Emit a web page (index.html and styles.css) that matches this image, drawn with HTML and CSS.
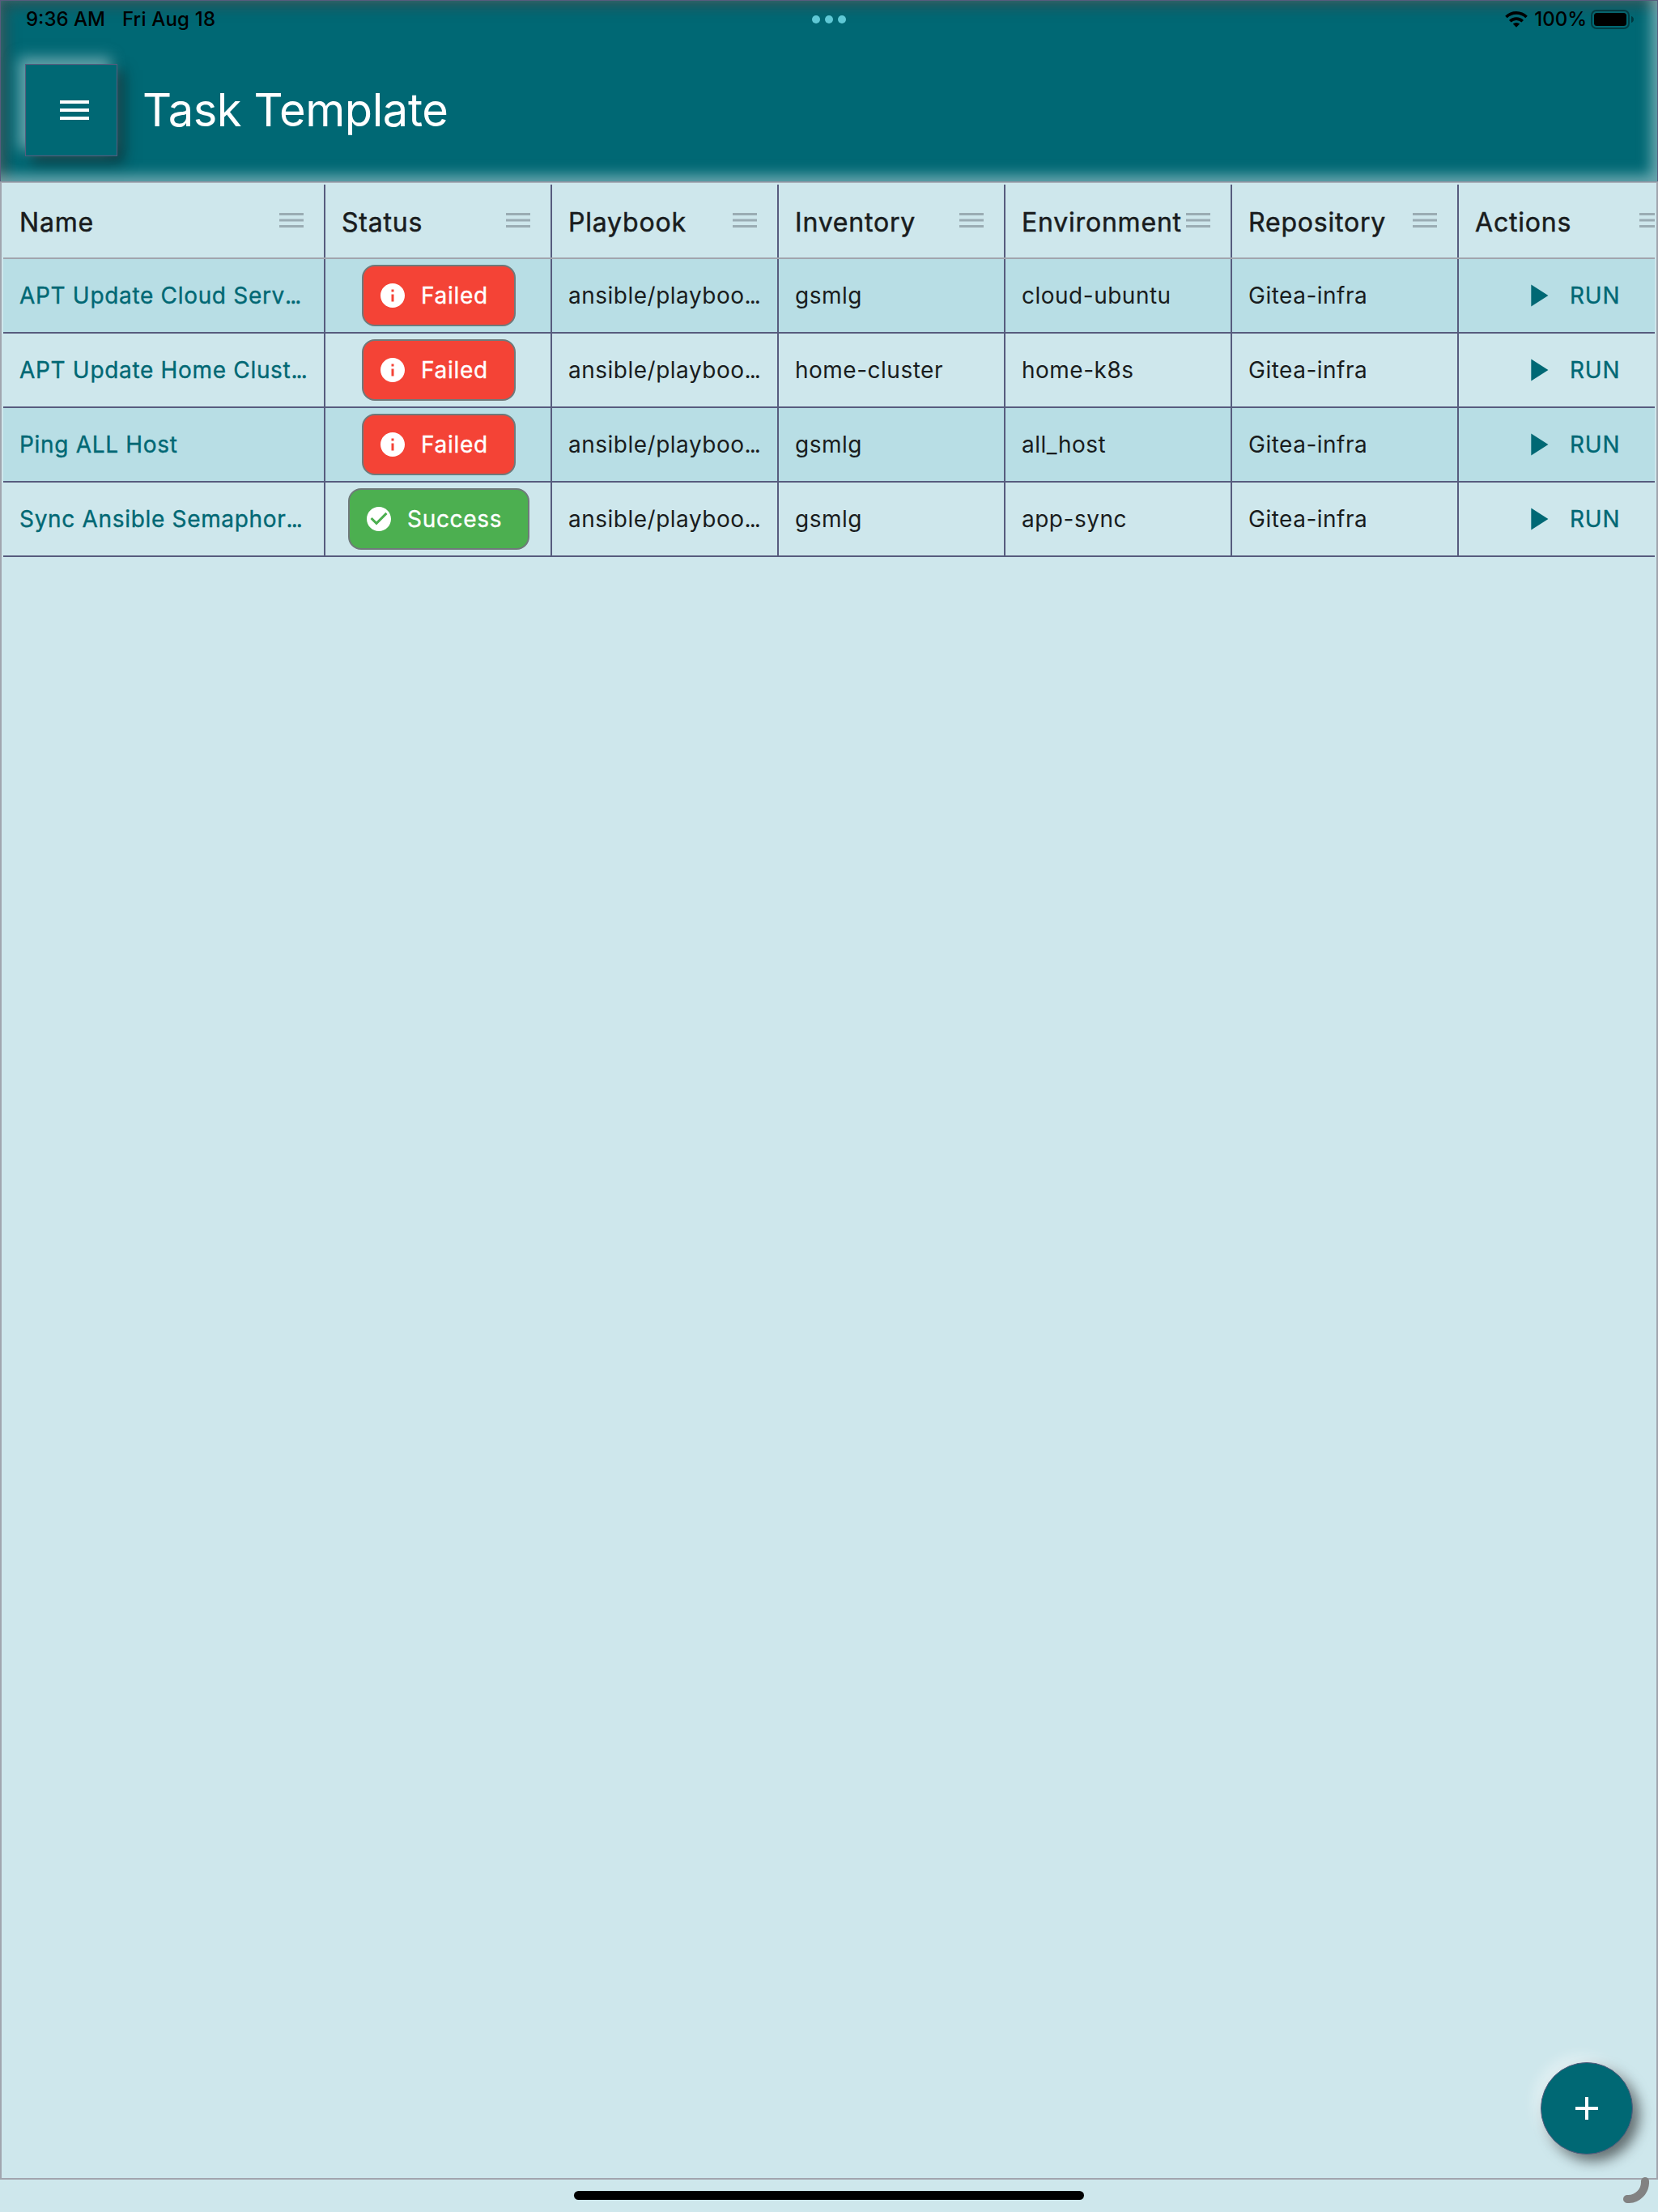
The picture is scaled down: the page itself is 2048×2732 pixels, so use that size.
FILE: index.html
```html
<!DOCTYPE html>
<html lang="en">
<head>
<meta charset="utf-8">
<title>Task Template</title>
<link rel="stylesheet" href="styles.css">
</head>
<body>
<svg class="defs" aria-hidden="true">
  <symbol id="menu" viewBox="0 0 24 24"><path d="M3 18h18v-2H3v2zm0-5h18v-2H3v2zm0-7v2h18V6H3z"/></symbol>
  <symbol id="handle" viewBox="0 0 30 18"><path d="M0 0h30v3H0zM0 7.500h30v3H0zM0 15h30v3H0z"/></symbol>
  <symbol id="info" viewBox="0 0 24 24"><path d="M12 2C6.480 2 2 6.480 2 12s4.480 10 10 10 10-4.480 10-10S17.520 2 12 2zm1 15h-2v-6h2v6zm0-8h-2V7h2v2z"/></symbol>
  <symbol id="check" viewBox="0 0 24 24"><path d="M12 2C6.480 2 2 6.480 2 12s4.480 10 10 10 10-4.480 10-10S17.520 2 12 2zm-2 15l-5-5 1.410-1.410L10 14.170l7.590-7.590L19 8l-9 9z"/></symbol>
  <symbol id="play" viewBox="0 0 24 24"><path d="M8 5v14l11-7z"/></symbol>
</svg>
<header class="appbar">
  <div class="statusbar">
    <div class="clock"><span>9:36 AM</span><span class="date">Fri Aug 18</span></div>
    <div class="dots"><i></i><i></i><i></i></div>
    <div class="power">
      <svg class="wifi" viewBox="0 0 28 20"><path d="M14 19.800l4.200-4.200a6 6 0 0 0-8.400 0zM14 7.300c3.500 0 6.600 1.300 9 3.600l-2.600 2.600A9.300 9.300 0 0 0 14 11a9.300 9.300 0 0 0-6.400 2.500L5 10.900a13 13 0 0 1 9-3.600zM14 0c5.300 0 10.200 2.200 13.800 5.700l-2.500 2.500A16.200 16.200 0 0 0 14 3.700 16.200 16.200 0 0 0 2.700 8.200L.2 5.700A19.700 19.700 0 0 1 14 0z"/></svg>
      <span>100%</span>
      <svg class="battery" viewBox="0 0 54 24"><rect x="1" y="1" width="46" height="22" rx="6" fill="none" stroke="#000" stroke-opacity=".4" stroke-width="2"/><rect x="4" y="4" width="40" height="16" rx="3.500"/><path d="M50 8a4.200 4.200 0 0 1 0 8z" opacity=".45"/></svg>
    </div>
  </div>
  <div class="toolbar">
    <button class="menu-button" aria-label="Menu"><svg><use href="#menu"/></svg></button>
    <h1>Task Template</h1>
  </div>
</header>
<main class="grid-frame">
  <div class="grid">
    <div class="row head">
      <div class="cell">Name<svg><use href="#handle"/></svg></div>
      <div class="cell">Status<svg><use href="#handle"/></svg></div>
      <div class="cell">Playbook<svg><use href="#handle"/></svg></div>
      <div class="cell">Inventory<svg><use href="#handle"/></svg></div>
      <div class="cell">Environment<svg><use href="#handle"/></svg></div>
      <div class="cell">Repository<svg><use href="#handle"/></svg></div>
      <div class="cell">Actions<svg><use href="#handle"/></svg></div>
    </div>
    <div class="row odd">
      <div class="cell link">APT Update Cloud Serv<span class="more">...</span></div>
      <div class="cell status"><span class="badge failed"><svg><use href="#info"/></svg><span>Failed</span></span></div>
      <div class="cell">ansible/playboo<span class="more">...</span></div>
      <div class="cell">gsmlg</div>
      <div class="cell">cloud-ubuntu</div>
      <div class="cell">Gitea-infra</div>
      <div class="cell run"><svg><use href="#play"/></svg>RUN</div>
    </div>
    <div class="row">
      <div class="cell link">APT Update Home Clust<span class="more">...</span></div>
      <div class="cell status"><span class="badge failed"><svg><use href="#info"/></svg><span>Failed</span></span></div>
      <div class="cell">ansible/playboo<span class="more">...</span></div>
      <div class="cell">home-cluster</div>
      <div class="cell">home-k8s</div>
      <div class="cell">Gitea-infra</div>
      <div class="cell run"><svg><use href="#play"/></svg>RUN</div>
    </div>
    <div class="row odd">
      <div class="cell link">Ping ALL Host</div>
      <div class="cell status"><span class="badge failed"><svg><use href="#info"/></svg><span>Failed</span></span></div>
      <div class="cell">ansible/playboo<span class="more">...</span></div>
      <div class="cell">gsmlg</div>
      <div class="cell">all_host</div>
      <div class="cell">Gitea-infra</div>
      <div class="cell run"><svg><use href="#play"/></svg>RUN</div>
    </div>
    <div class="row">
      <div class="cell link">Sync Ansible Semaphor<span class="more">...</span></div>
      <div class="cell status"><span class="badge success"><svg><use href="#check"/></svg><span>Success</span></span></div>
      <div class="cell">ansible/playboo<span class="more">...</span></div>
      <div class="cell">gsmlg</div>
      <div class="cell">app-sync</div>
      <div class="cell">Gitea-infra</div>
      <div class="cell run"><svg><use href="#play"/></svg>RUN</div>
    </div>
  </div>
</main>
<footer class="home-area"><div class="home-indicator"></div></footer>
<button class="fab" aria-label="Add"><svg viewBox="0 0 28 28"><path d="M0 12h12V0h4v12h12v4H16v12h-4V16H0z"/></svg></button>
<svg class="corner" viewBox="0 0 32 32"><path d="M27 5A21 21 0 0 1 5 27" fill="none" stroke="#828282" stroke-width="10" stroke-linecap="round"/></svg>
</body>
</html>
```
FILE: styles.css
```css
* { box-sizing: border-box; }

body {
  margin: 0;
  height: 2732px;
  display: flex;
  flex-direction: column;
  position: relative;
  overflow: hidden;
  background: #cee7ec;
  color: #191c1d;
  font-family: Inter, "Liberation Sans", sans-serif;
}

button { padding: 0; font: inherit; }
.defs { display: none; }

.appbar {
  height: 225px;
  flex: none;
  background: #006874;
  border: 1px solid #575c7e;
  box-shadow:
    inset -8px -8px 16px rgba(206, 231, 236, .5),
    inset 8px 8px 16px rgba(65, 72, 72, .6);
}

.statusbar {
  height: 46px;
  display: grid;
  grid-template-columns: 1fr auto 1fr;
  align-items: center;
  padding: 0 28px;
  color: #000;
  font-size: 24px;
  font-weight: 500;
  line-height: 46px;
}
.clock { display: flex; gap: 21px; padding-left: 3px; }
.date { letter-spacing: .2px; }
.dots { display: flex; gap: 6px; }
.dots i { width: 10px; height: 10px; border-radius: 50%; background: #5fc8d5; }
.power { display: flex; justify-content: flex-end; align-items: center; }
.wifi { width: 28px; height: 20px; margin-right: 8px; }
.battery { width: 54px; height: 24px; margin-left: 5px; }

.toolbar { height: 177px; display: flex; align-items: center; padding: 0 0 0 30px; }
.menu-button {
  width: 114px;
  height: 114px;
  display: grid;
  place-items: center;
  padding-left: 7px;
  background: #006874;
  border: 1px solid #575c7e;
  box-shadow: -8px -8px 16px rgba(206, 231, 236, .5), 8px 8px 16px rgba(25, 28, 29, .55);
}
.menu-button svg { width: 48px; height: 48px; fill: #fff; }
h1 {
  margin: 1px 0 0 31px;
  color: #fff;
  font-size: 56px;
  font-weight: 400;
  letter-spacing: -.4px;
}

.grid-frame {
  height: 2468px;
  flex: none;
  margin-top: -1px;
  padding: 2px;
  border: 2px solid #a1a5ae;
  border-top-color: #a1a5aecc;
}
.grid { overflow: hidden; }
.row {
  width: 2080px;
  height: 92px;
  display: grid;
  grid-template-columns: 398px repeat(6, 280px);
  border-bottom: 2px solid #575c7e;
}
.row.odd { background: #b8dee5; }
.cell {
  display: flex;
  align-items: center;
  padding: 0 0 0 20px;
  border-right: 2px solid #575c7e;
  font-size: 28px;
  letter-spacing: .5px;
  white-space: nowrap;
}
.link { color: #006874; letter-spacing: .68px; -webkit-text-stroke: .35px; }
.more { letter-spacing: -1.9px; }
.head { border-color: #a1a5ae; }
.head .cell {
  justify-content: space-between;
  padding: 2px 25px 0 20px;
  font-size: 32px;
  letter-spacing: .8px;
  -webkit-text-stroke: .5px;
}
.head svg { width: 30px; height: 18px; flex: none; margin-top: -4px; fill: #9aacb3; -webkit-text-stroke: 0; }

.cell.status { justify-content: center; padding: 0 0 0 2px; }
.badge {
  height: 76px;
  display: flex;
  align-items: center;
  gap: 17px;
  padding-left: 18px;
  border: 2px solid #6f797a;
  border-radius: 16px;
  color: #fff;
  letter-spacing: .7px;
  -webkit-text-stroke: .35px;
}
.badge svg { width: 36px; height: 36px; fill: #fff; }
.failed { width: 190px; background: #f44336; }
.success { width: 224px; background: #4caf50; }
.cell.run { padding: 0 0 0 74px; color: #006874; letter-spacing: .8px; -webkit-text-stroke: .35px; }
.run svg { width: 46px; height: 46px; margin: 0 17px 0 0; fill: #006874; }

.home-area { flex: 1; display: flex; justify-content: center; align-items: flex-start; padding-top: 14px; }
.home-indicator { width: 630px; height: 11px; border-radius: 6px; background: #000; }

.fab {
  position: absolute;
  left: 1903px;
  top: 2547px;
  width: 114px;
  height: 114px;
  display: grid;
  place-items: center;
  background: #006874;
  border: 1px solid #575c7e;
  border-radius: 50%;
  box-shadow: -8px -8px 16px rgba(255, 255, 255, .4), 8px 8px 16px rgba(25, 28, 29, .6);
}
.fab svg { width: 28px; height: 28px; fill: #fff; }
.corner { position: absolute; left: 2005px; top: 2689px; width: 32px; height: 32px; }
```
